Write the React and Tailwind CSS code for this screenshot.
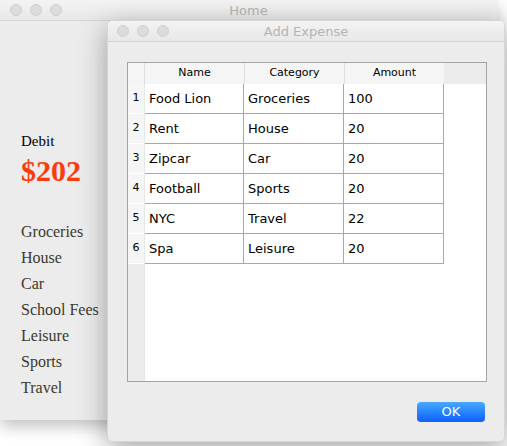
import React from "react";

const rows = [
  ["Food Lion", "Groceries", "100"],
  ["Rent", "House", "20"],
  ["Zipcar", "Car", "20"],
  ["Football", "Sports", "20"],
  ["NYC", "Travel", "22"],
  ["Spa", "Leisure", "20"],
];

const categories = ["Groceries", "House", "Car", "School Fees", "Leisure", "Sports", "Travel"];

const Lights = () => (
  <div className="flex items-center gap-[8px]">
    {[0, 1, 2].map((i) => (
      <span
        key={i}
        className="w-[12px] h-[12px] rounded-full bg-[#dcdcdc] border border-[#d0d0d0]"
      />
    ))}
  </div>
);

const App = () => {
  return (
    <div
      className="relative w-[507px] h-[446px] overflow-hidden bg-white"
      style={{ fontFamily: '"DejaVu Sans", "Liberation Sans", sans-serif' }}
    >
      {/* Home window */}
      <div className="absolute left-0 top-0 w-[497px] h-[420px] rounded-tr-[5px] bg-[#ececec] shadow-[0_6px_16px_rgba(0,0,0,0.25)] flex flex-col">
        <div className="relative h-[21px] border-b border-[#d4d4d4] bg-gradient-to-b from-[#f3f3f3] to-[#e8e8e8] flex items-center pl-[10px]">
          <Lights />
          <span className="absolute left-0 right-0 top-[1px] text-center text-[13px] text-[#b4b4b4] pointer-events-none">
            Home
          </span>
        </div>
        <div
          className="flex-1 pl-[21px] pt-[111px] text-[#3a3a2c]"
          style={{ fontFamily: '"Liberation Serif", "Times New Roman", serif' }}
        >
          <div className="text-[15px] leading-[18px] text-black">Debit</div>
          <div className="mt-[4px] text-[30px] leading-[34px] font-bold text-[#ff3b0a]">$202</div>
          <div className="mt-[31px] flex flex-col">
            {categories.map((c) => (
              <div key={c} className="text-[16px] leading-[26px]">
                {c}
              </div>
            ))}
          </div>
        </div>
      </div>

      {/* Add Expense window */}
      <div className="absolute left-[107px] top-[20px] w-[398px] h-[422px] rounded-[5px] bg-[#ececec] shadow-[0_8px_28px_rgba(0,0,0,0.35)] flex flex-col overflow-hidden border border-[#d6d6d6]">
        <div className="relative h-[21px] shrink-0 border-b border-[#d4d4d4] bg-gradient-to-b from-[#f3f3f3] to-[#e8e8e8] flex items-center pl-[9px]">
          <Lights />
          <span className="absolute left-0 right-0 top-[1px] text-center text-[13px] text-[#b4b4b4] pointer-events-none">
            Add Expense
          </span>
        </div>
        <div className="flex-1 flex flex-col px-[19px] pt-[20px]">
          {/* Table */}
          <div className="h-[320px] w-[360px] border border-[#a3a3a3] bg-white flex flex-col">
            <div className="h-[21px] flex bg-[#ebebeb] text-[11px] text-black">
              <div className="w-[16px] bg-[#f5f5f5]" />
              {["Name", "Category", "Amount"].map((h) => (
                <div
                  key={h}
                  className="w-[100px] bg-[#f5f5f5] flex items-center justify-center border-l border-[#e0e0e0]"
                >
                  {h}
                </div>
              ))}
            </div>
            <div className="flex-1 flex">
              <div className="w-[16px] bg-[#ececec] flex flex-col">
                {rows.map((r, i) => (
                  <div
                    key={i}
                    className="h-[30px] bg-[#f6f6f6] border-b border-white flex items-center justify-center text-[11px] text-black"
                  >
                    {i + 1}
                  </div>
                ))}
              </div>
              <div className="flex flex-col border-l border-[#e6e6e6]">
                {rows.map((r, i) => (
                  <div key={i} className="h-[30px] flex border-b border-[#a8a8a8] text-[13px] text-black">
                    {r.map((cell, j) => (
                      <div
                        key={j}
                        className={`h-full flex items-center pl-[4px] border-r border-[#a8a8a8] ${
                          j === 0 ? "w-[99px]" : "w-[100px]"
                        }`}
                      >
                        {cell}
                      </div>
                    ))}
                  </div>
                ))}
              </div>
            </div>
          </div>
          {/* Buttons */}
          <div className="flex justify-end mt-[20px]">
            <button className="w-[68px] h-[20px] rounded-[4px] bg-gradient-to-b from-[#4aa8ff] to-[#0f62ff] border-b border-[#5a3cff] text-white text-[13px] leading-none flex items-center justify-center">
              OK
            </button>
          </div>
        </div>
      </div>
    </div>
  );
};

export default App;
